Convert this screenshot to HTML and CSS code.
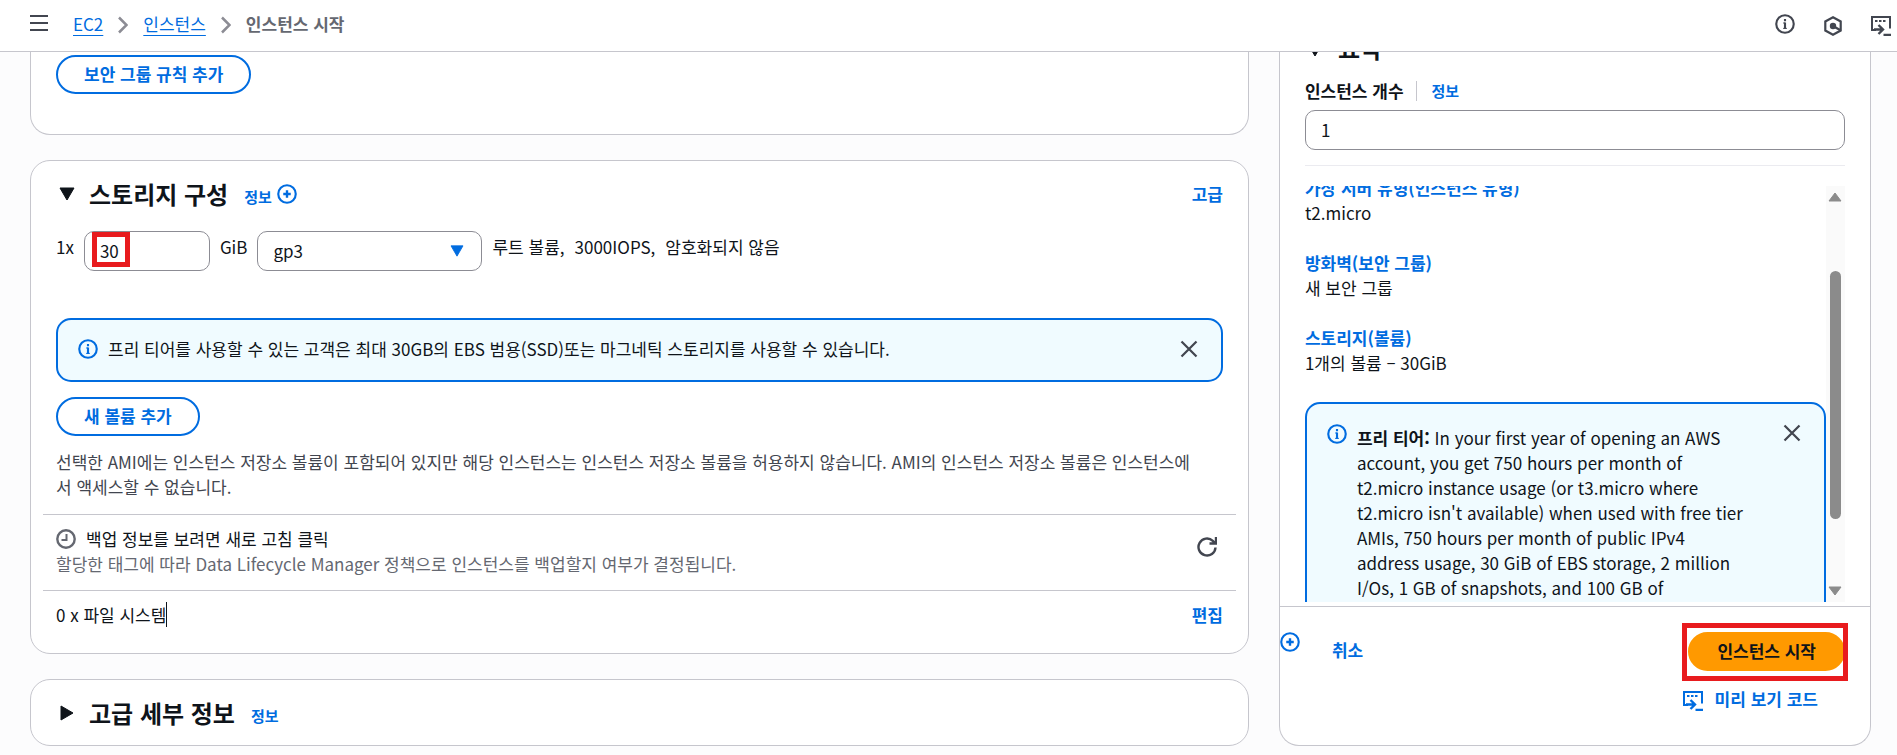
FILE: index.html
```html
<!DOCTYPE html>
<html lang="ko">
<head>
<meta charset="utf-8">
<title>인스턴스 시작 | EC2</title>
<link rel="stylesheet" href="styles.css">
</head>
<body>
<svg class="defs" aria-hidden="true">
  <symbol id="info" viewBox="0 0 16 16"><circle cx="8" cy="8" r="7" fill="none" stroke="currentColor" stroke-width="1.700"/><path d="M8 4v1.700M8 6.800v5" fill="none" stroke="currentColor" stroke-width="1.700"/><path d="M6.500 7.200H8M6.500 11.500h3" fill="none" stroke="currentColor" stroke-width=".8"/></symbol>
  <symbol id="plus" viewBox="0 0 16 16"><circle cx="8" cy="8" r="7" fill="none" stroke="currentColor" stroke-width="1.700"/><path d="M8 5v6M5 8h6" fill="none" stroke="currentColor" stroke-width="1.900"/></symbol>
  <symbol id="close" viewBox="0 0 16 16"><path d="M2 2l12 12M14 2L2 14" fill="none" stroke="currentColor" stroke-width="1.800"/></symbol>
  <symbol id="chevron" viewBox="0 0 10 18"><path d="M1 1.500L8.500 9 1 16.500" fill="none" stroke="currentColor" stroke-width="2.500"/></symbol>
  <symbol id="down" viewBox="0 0 16 14"><path d="M1 1h14L8 13z" fill="currentColor" stroke="currentColor" stroke-linejoin="round"/></symbol>
  <symbol id="right" viewBox="0 0 14 16"><path d="M1 1v14L13 8z" fill="currentColor" stroke="currentColor" stroke-linejoin="round"/></symbol>
  <symbol id="shell" viewBox="0 0 20 20"><path d="M5 14H1V1h18v11.500" fill="none" stroke="currentColor" stroke-width="2"/><path d="M4 5h2.500M8 5h2.500M12 5h2.500" stroke="currentColor" stroke-width="2"/><path d="M3 13.500h8M7.500 9l4.500 4.500L7.500 18M12.500 19H20" fill="none" stroke="currentColor" stroke-width="2.400"/></symbol>
</svg>

<header class="topbar">
  <button class="icon-btn" aria-label="메뉴"><svg width="18" height="16" viewBox="0 0 18 16"><path d="M0 1h18M0 8h18M0 15h18" stroke="currentColor" stroke-width="2"/></svg></button>
  <nav class="crumbs" aria-label="탐색 경로">
    <a href="#ec2">EC2</a>
    <svg class="chev"><use href="#chevron"/></svg>
    <a href="#instances">인스턴스</a>
    <svg class="chev"><use href="#chevron"/></svg>
    <span class="current">인스턴스 시작</span>
  </nav>
  <div class="tools">
    <button class="icon-btn info-btn" aria-label="정보"><svg class="i20"><use href="#info"/></svg></button>
    <button class="icon-btn" aria-label="진단"><svg width="20" height="20" viewBox="0 0 20 20"><path d="M10 1.300l7.700 4.200v9L10 18.700l-7.700-4.200v-9z" fill="none" stroke="currentColor" stroke-width="2.200"/><circle cx="10" cy="10" r="3.200" fill="currentColor"/><path d="M10 10l7 4" stroke="currentColor" stroke-width="2.200"/></svg></button>
    <button class="icon-btn" aria-label="CloudShell"><svg class="i20"><use href="#shell"/></svg></button>
  </div>
</header>

<main class="layout">
  <div class="forms">
    <section class="card card-security">
      <button class="btn">보안 그룹 규칙 추가</button>
    </section>

    <section class="card card-storage">
      <div class="card-head">
        <svg class="tri"><use href="#down"/></svg>
        <h2>스토리지 구성</h2>
        <a class="info-link" href="#storage-info">정보</a>
        <svg class="i20 blue"><use href="#plus"/></svg>
        <a class="link push" href="#advanced">고급</a>
      </div>

      <div class="volume">
        <label for="size">1x</label>
        <div class="size-box">
          <input class="field" id="size" type="text" value="30">
          <span class="mark mark-size"></span>
        </div>
        <label for="type">GiB</label>
        <div class="select-box">
          <select class="field" id="type"><option>gp3</option></select>
          <svg class="caret"><use href="#down"/></svg>
        </div>
        <p class="specs"><span>루트 볼륨,</span><span>3000IOPS,</span><span>암호화되지 않음</span></p>
      </div>

      <div class="alert">
        <svg class="i20 blue"><use href="#info"/></svg>
        <p>프리 티어를 사용할 수 있는 고객은 최대 30GB의 EBS 범용(SSD)또는 마그네틱 스토리지를 사용할 수 있습니다.</p>
        <button class="icon-btn" aria-label="닫기"><svg class="i20"><use href="#close"/></svg></button>
      </div>

      <button class="btn">새 볼륨 추가</button>
      <p class="note">선택한 AMI에는 인스턴스 저장소 볼륨이 포함되어 있지만 해당 인스턴스는 인스턴스 저장소 볼륨을 허용하지 않습니다. AMI의 인스턴스 저장소 볼륨은 인스턴스에서 액세스할 수 없습니다.</p>

      <div class="strip strip-backup">
        <div>
          <p class="backup"><svg class="i20 gray" viewBox="0 0 20 20"><circle cx="10" cy="10" r="8.700" fill="none" stroke="currentColor" stroke-width="2.400"/><path d="M10.500 5v6H5.500" fill="none" stroke="currentColor" stroke-width="2"/></svg>백업 정보를 보려면 새로 고침 클릭</p>
          <p class="muted">할당한 태그에 따라 Data Lifecycle Manager 정책으로 인스턴스를 백업할지 여부가 결정됩니다.</p>
        </div>
        <button class="icon-btn refresh" aria-label="새로 고침"><svg class="i20" viewBox="0 0 20 20"><path d="M18.500 10.500a8.500 8.500 0 1 1-2.700-6.700L18 6M19 0v6.500h-6.500" fill="none" stroke="currentColor" stroke-width="2.400"/></svg></button>
      </div>

      <div class="strip">
        <p class="files">0 x 파일 시스템</p>
        <a class="link" href="#edit">편집</a>
      </div>
    </section>

    <section class="card card-details">
      <div class="card-head">
        <svg class="tri"><use href="#right"/></svg>
        <h2>고급 세부 정보</h2>
        <a class="info-link" href="#details-info">정보</a>
      </div>
    </section>
  </div>

  <aside class="card summary">
    <div class="summary-top">
      <div class="summary-title"><svg class="tri"><use href="#down"/></svg><h2>요약</h2></div>
      <div class="count-label"><label for="count">인스턴스 개수</label><a class="info-link" href="#count-info">정보</a></div>
      <input class="field" id="count" type="text" value="1">
    </div>
    <div class="scroller">
      <div class="scroll-content">
        <dl class="facts">
          <div><dt><a class="link" href="#s-type">가상 서버 유형(인스턴스 유형)</a></dt><dd>t2.micro</dd></div>
          <div><dt><a class="link" href="#s-firewall">방화벽(보안 그룹)</a></dt><dd>새 보안 그룹</dd></div>
          <div><dt><a class="link" href="#s-storage">스토리지(볼륨)</a></dt><dd>1개의 볼륨 – 30GiB</dd></div>
        </dl>
        <div class="alert alert-tier">
          <svg class="i20 blue"><use href="#info"/></svg>
          <p><strong>프리 티어:</strong> In your first year of opening an AWS account, you get 750 hours per month of t2.micro instance usage (or t3.micro where t2.micro isn't available) when used with free tier AMIs, 750 hours per month of public IPv4 address usage, 30 GiB of EBS storage, 2 million I/Os, 1 GB of snapshots, and 100 GB of</p>
          <button class="icon-btn" aria-label="닫기"><svg class="i20"><use href="#close"/></svg></button>
        </div>
      </div>
      <div class="scrollbar" aria-hidden="true">
        <svg class="arrow" viewBox="0 0 14 10"><path d="M7 1l6 8H1z" fill="currentColor" stroke="currentColor" stroke-linejoin="round"/></svg>
        <span class="thumb"></span>
        <svg class="arrow" viewBox="0 0 14 10"><path d="M7 9l6-8H1z" fill="currentColor" stroke="currentColor" stroke-linejoin="round"/></svg>
      </div>
    </div>
    <div class="actions">
      <svg class="i20 blue"><use href="#plus"/></svg>
      <a class="link cancel" href="#cancel">취소</a>
      <div class="launch">
        <div class="launch-box"><button class="btn primary">인스턴스 시작</button><span class="mark mark-launch"></span></div>
        <a class="link preview" href="#preview"><svg class="i20"><use href="#shell"/></svg>미리 보기 코드</a>
      </div>
    </div>
  </aside>
</main>
</body>
</html>
```
FILE: styles.css
```css
* { box-sizing: border-box; }

body {
  margin: 0;
  background: #fcfcfd;
  color: #0f141a;
  font: 17px/25px "Noto Sans CJK KR", "Noto Sans", sans-serif;
}

h2, p, dl, dd { margin: 0; }
h2 { font-size: 24px; line-height: 30px; font-weight: 700; }
svg { display: block; flex: none; }
input, select, button { font: inherit; color: inherit; }

.defs { position: absolute; width: 0; height: 0; }
.i20 { width: 20px; height: 20px; }
.blue { color: #006ce0; }
.gray { color: #656871; }
.tri { width: 16px; height: 16px; }

.icon-btn {
  display: block;
  padding: 0;
  border: 0;
  background: none;
  color: #424650;
}

.link { color: #006ce0; font-weight: 700; text-decoration: none; }
.info-link { color: #006ce0; font-size: 15px; font-weight: 700; text-decoration: none; }

.btn {
  display: block;
  height: 39px;
  padding: 0 26px 2px;
  border: 2px solid #006ce0;
  border-radius: 20px;
  background: #fff;
  color: #006ce0;
  font-weight: 700;
  line-height: 30px;
}

.field {
  display: block;
  width: 100%;
  height: 40px;
  padding: 0 15px 2px;
  border: 1px solid #8c8c94;
  border-radius: 10px;
  background: #fff;
}

/* Top bar */
.topbar {
  display: flex;
  align-items: center;
  height: 52px;
  padding: 0 0 5px 30px;
  border-bottom: 1px solid #c6c6cd;
  background: #fff;
}
.crumbs { display: flex; align-items: center; gap: 15px; margin-left: 25px; }
.crumbs a { color: #006ce0; text-decoration: underline; text-underline-offset: 4px; text-decoration-thickness: 1px; }
.crumbs .current { color: #656871; font-weight: 700; }
.chev { width: 10px; height: 18px; margin-top: 4px; color: #8c8c94; }
.tools { display: flex; align-items: center; gap: 28px; margin-left: auto; padding: 6px 6px 0 0; }
.info-btn { padding-bottom: 5px; }

/* Page columns */
.layout {
  display: grid;
  grid-template-columns: minmax(0, 70fr) minmax(0, 34fr);
  gap: 30px;
  padding: 0 26px 9px 30px;
  overflow: hidden;
}
.forms { display: flex; flex-direction: column; gap: 25px; }
.card { border: 1px solid #c6c6cd; border-radius: 20px; background: #fff; }
.card-security { padding: 3px 25px 40px; border-top: 0; border-radius: 0 0 20px 20px; }
.card-storage { padding: 18px 25px 26px; }
.card-details { padding: 18px 25px 17px; }

.card-head { display: flex; align-items: center; height: 30px; }
.card-head .tri { margin: 0 14px 0 3px; }
.card-head h2 { margin-top: -1px; }
.card-head .info-link { margin: 4px 5px 0 16px; }
.card-head .push { margin: -2px 0 0 auto; }

/* Volume row */
.volume { display: flex; align-items: flex-start; gap: 10px; margin-top: 22px; }
.volume label, .specs { padding-top: 3px; }
.size-box { position: relative; width: 126px; }
.select-box { display: grid; align-items: center; width: 225px; }
.select-box > * { grid-area: 1 / 1; }
.select-box select { appearance: none; }
.caret { justify-self: end; width: 14px; height: 12px; margin-right: 18px; color: #006ce0; pointer-events: none; }
.specs { display: flex; gap: 10px; }

/* Highlight frames lying over controls */
.mark { position: absolute; border: 5px solid #e81b1e; pointer-events: none; }
.mark-size { left: 8px; top: 1px; width: 38px; height: 35px; }
.mark-launch { inset: -9px -3px -10px -6px; }

.alert {
  display: flex;
  align-items: center;
  gap: 10px;
  padding: 16px 22px 19px 20px;
  border: 2px solid #006ce0;
  border-radius: 15px;
  background: #f0fbff;
}
.alert p { flex: 1; }
.card-storage .alert { margin: 47px 0 15px; }

.note { padding: 13px 25px 15px 0; color: #424650; }

.strip {
  display: flex;
  align-items: center;
  justify-content: space-between;
  margin: 0 -13px;
  padding: 11px 13px 0;
  border-top: 1px solid #c6c6cd;
}
.strip-backup { align-items: flex-start; padding-bottom: 14px; }
.backup { display: flex; align-items: center; gap: 10px; }
.muted { color: #656871; }
.refresh { margin: 11px 6px 0 0; }
.files { border-right: 1px solid #0f141a; }

/* Summary panel */
.summary { display: flex; flex-direction: column; border-top: 0; border-radius: 0 0 20px 20px; }
.summary-top { margin: 0 25px; padding-bottom: 15px; border-bottom: 1px solid #ebebf0; }
.summary-title { display: flex; align-items: center; gap: 15px; margin: -19px 0 15px; padding-left: 2px; }
.summary-title .tri { margin-top: 4px; }
.count-label { display: flex; align-items: center; margin-bottom: 7px; font-weight: 700; }
.count-label .info-link { margin-left: 12px; padding-left: 15px; border-left: 1px solid #c6c6cd; line-height: 20px; }

.scroller { display: flex; height: 416px; margin: 20px 25px 4px; overflow: hidden; }
.scroll-content { flex: 1; min-width: 0; margin-top: -11px; }
.facts { display: grid; gap: 25px; margin-bottom: 27px; }
.alert-tier { align-items: flex-start; padding-top: 21px; }
.alert-tier p { margin-right: 27px; }
.alert-tier .icon-btn { margin-top: -2px; }
.alert-tier > .i20 { margin-top: -1px; }

.scrollbar {
  display: flex;
  flex-direction: column;
  align-items: center;
  justify-content: space-between;
  width: 19px;
  padding: 6px 0;
  background: #fafafa;
}
.arrow { width: 14px; height: 10px; color: #8b8b8b; }
.thumb { width: 11px; height: 248px; margin-top: 2px; border-radius: 6px; background: #8b8b8b; }

.actions { display: flex; align-items: flex-start; padding: 25px 25px 0 0; border-top: 1px solid #c6c6cd; }
.cancel { margin: 5px auto 0 32px; }
.launch { display: flex; flex-direction: column; align-items: flex-end; gap: 15px; }
.launch-box { position: relative; }
.primary { padding: 0 27px 2px; border-color: #ff9900; background: #ff9900; color: #0f141a; }
.preview { display: flex; align-items: center; gap: 12px; margin-right: 27px; }
.preview svg { margin-top: 4px; }
```
